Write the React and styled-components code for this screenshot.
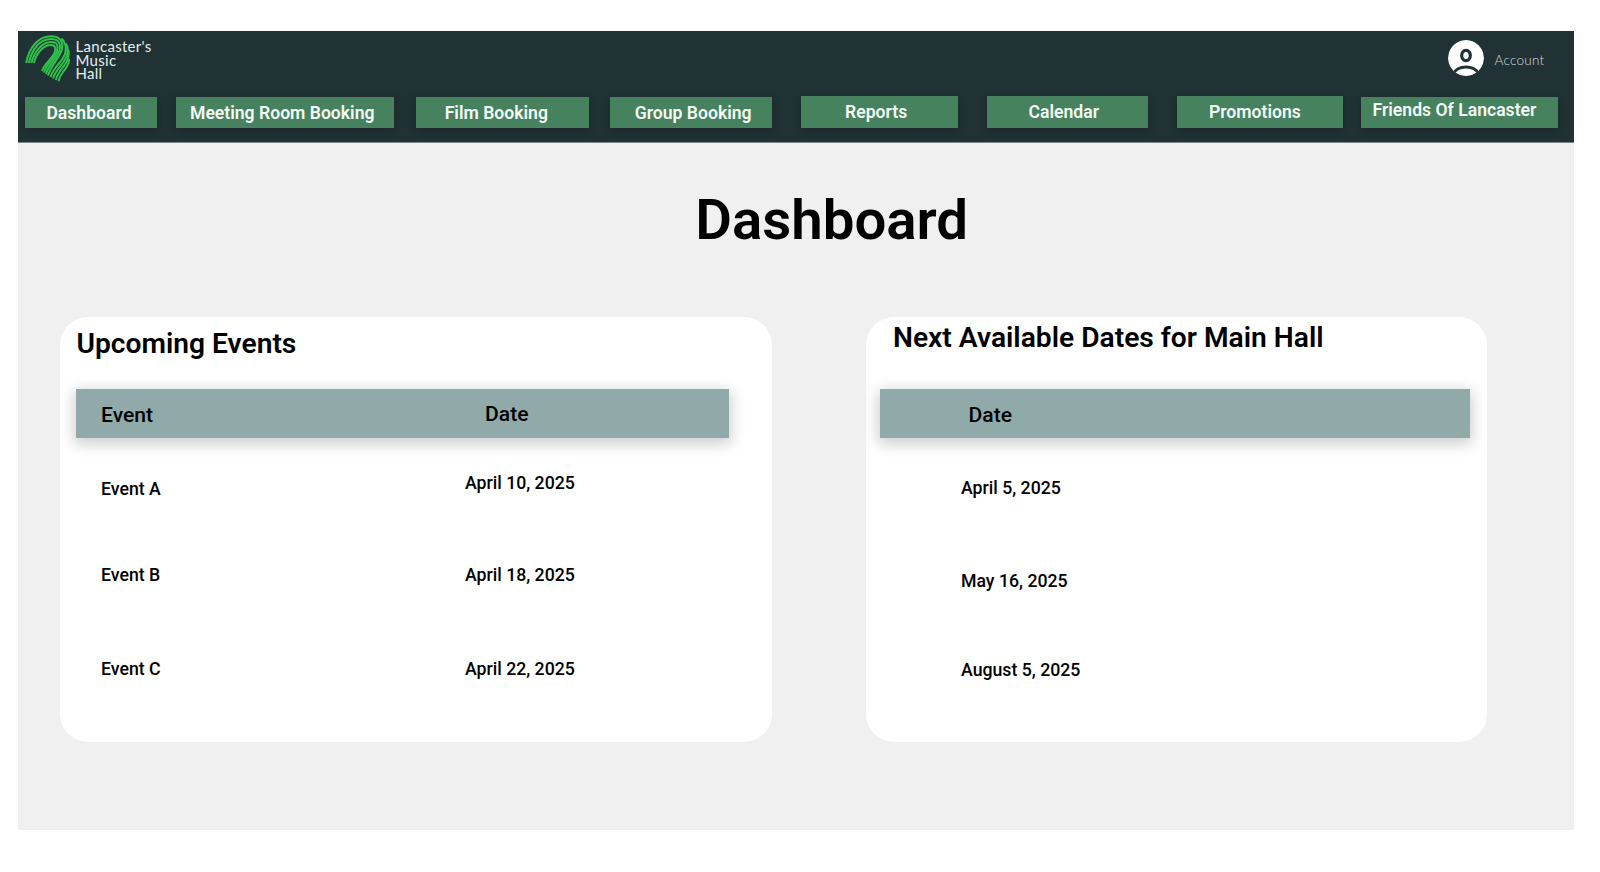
import React from "react";
import styled, { createGlobalStyle } from "styled-components";

const Global = createGlobalStyle`
  * { box-sizing: border-box; }
  body { margin: 0; background: #fff; font-family: Roboto, "Liberation Sans", sans-serif; color: #000; }
  h1, h2, p { margin: 0; }
`;

const Page = styled.div`
  width: 1556px;
  height: 799px;
  margin: 31px 0 0 18px;
  background: #f0f0f0;
`;

const Header = styled.header`
  height: 111.5px;
  background: #213235;
  border-bottom: 1px solid #7d8587;
`;

const TopBar = styled.div`
  display: flex;
  justify-content: space-between;
  height: 65px;
  padding: 4px 29.6px 0 7px;
`;

const Brand = styled.div`
  display: flex;
  gap: 5.5px;
`;

const BrandName = styled.p`
  padding-top: 5px;
  font-family: Lato, sans-serif;
  font-size: 15px;
  line-height: 13.5px;
  letter-spacing: 0.3px;
  color: #e6eeee;
  white-space: pre-line;
`;

const Account = styled.div`
  display: flex;
  gap: 11px;
  padding-top: 5px;
`;

const AccountLabel = styled.span`
  padding-top: 12px;
  font-family: Lato, sans-serif;
  font-weight: 300;
  font-size: 13.6px;
  line-height: 16px;
  color: #d3dada;
  letter-spacing: 0.2px;
`;

const Nav = styled.nav`
  display: flex;
  padding-left: 7.1px;
`;

const NavButton = styled.a`
  width: ${(p) => p.$w}px;
  height: ${(p) => p.$h || 31}px;
  margin-left: ${(p) => p.$gap}px;
  margin-top: ${(p) => p.$top}px;
  padding: ${(p) => p.$textTop}px 0 0 ${(p) => p.$inset}px;
  background: #46825e;
  box-shadow: 0 3px 8px 2px rgba(0, 0, 0, 0.16);
  color: #f4fbf6;
  font-weight: 600;
  font-size: 17.6px;
  line-height: 20px;
  white-space: nowrap;
`;

const Title = styled.h1`
  padding: 44px 0 0 677.2px;
  font-weight: 600;
  font-size: 56.4px;
  line-height: 66px;
`;

const Cards = styled.main`
  display: flex;
  gap: 94px;
  padding: 64.5px 0 0 42px;
`;

const Card = styled.section`
  width: ${(p) => p.$w}px;
  height: 425px;
  padding-left: ${(p) => p.$pad}px;
  border-radius: 28px;
  background: #fff;
`;

const CardTitle = styled.h2`
  height: 72px;
  padding: ${(p) => p.$top}px 0 0 ${(p) => p.$inset}px;
  font-weight: 600;
  font-size: 28.2px;
  line-height: 34px;
`;

const TableHead = styled.div`
  display: flex;
  width: ${(p) => p.$w}px;
  height: 49px;
  background: #8faaa9;
  box-shadow: 0 4px 14px 2px rgba(0, 0, 0, 0.2);
`;

const HeadCell = styled.div`
  width: ${(p) => p.$w}px;
  padding: ${(p) => p.$top}px 0 0 ${(p) => p.$inset}px;
  font-weight: 500;
  font-size: 21.1px;
  line-height: 24px;
`;

const TableBody = styled.div`
  display: flex;
`;

const Column = styled.div`
  width: ${(p) => p.$w}px;
  padding-left: ${(p) => p.$inset}px;
`;

const Cell = styled.div`
  margin-top: ${(p) => p.$gap}px;
  font-weight: 500;
  font-size: 17.7px;
  line-height: 20px;
  white-space: nowrap;
`;

const navItems = [
  { label: "Dashboard", w: 131.5, gap: 0, top: 1, inset: 21.3, textTop: 6 },
  { label: "Meeting Room Booking", w: 218, gap: 19.4, top: 1, inset: 14, textTop: 6 },
  { label: "Film Booking", w: 173, gap: 22, top: 1, inset: 28.7, textTop: 5.5 },
  { label: "Group Booking", w: 162, gap: 21, top: 1, inset: 24.7, textTop: 5.5 },
  { label: "Reports", w: 157, h: 31.5, gap: 29, top: 0, inset: 44, textTop: 6 },
  { label: "Calendar", w: 161, h: 31.5, gap: 29, top: 0, inset: 41.5, textTop: 6 },
  { label: "Promotions", w: 166, h: 31.5, gap: 29, top: 0, inset: 32, textTop: 6 },
  { label: "Friends Of Lancaster", w: 197, gap: 18, top: 1, inset: 11.5, textTop: 3.4 },
];

const eventNames = [["Event A", 41], ["Event B", 66], ["Event C", 73.9]];
const eventDates = [["April 10, 2025", 35], ["April 18, 2025", 72], ["April 22, 2025", 73.9]];
const hallDates = [["April 5, 2025", 40], ["May 16, 2025", 73], ["August 5, 2025", 69]];

const logoStrands = [
  "M1.2 28C4 13 13 1.2 26 1.2C35 1.2 38.5 7 37 14C35 23 26 30 23 40.5",
  "M3.8 28C7 14 15 4 26 4C34 4 36 9 34.5 15C32.5 23 24 29 21 39",
  "M6.4 28C9 17 17 7 26 7C32.5 7 33.5 11 32 16C30 23 22 28 19 37.5",
  "M9 28C11 19 18 10 26 10C31 10 31 14 29.5 18C27 24 20 28 17 36",
  "M36.5 3.5C42 9 42 17 38 23C34 29 28 34 25.5 42",
  "M41 8.5C44.5 15 42 22 38.5 27C34.5 32 30 37 28 43.5",
  "M43.3 15C45 22 42 27 38.5 31.5C35 36 32 40 30.8 45",
  "M44.3 24C44 30 41 33.5 38 37C36 39.5 34.5 42 33.5 46.2",
];

function Logo() {
  return (
    <svg width="45" height="47" viewBox="0 0 45 47" fill="none" stroke="#2fc24a" strokeWidth="2">
      {logoStrands.map((d) => <path key={d} d={d} />)}
    </svg>
  );
}

function Avatar() {
  return (
    <svg width="36" height="36" viewBox="0 0 36 36">
      <defs><clipPath id="disc"><circle cx="18" cy="18" r="18" /></clipPath></defs>
      <g clipPath="url(#disc)">
        <circle cx="18" cy="18" r="18" fill="#fff" />
        <ellipse cx="18" cy="15.5" rx="4.3" ry="5.2" fill="none" stroke="#213235" strokeWidth="3.2" />
        <path d="M5 34.5C9 24.5 27 24.5 31 34.5" fill="none" stroke="#213235" strokeWidth="3.2" />
      </g>
    </svg>
  );
}

function Cells({ items }) {
  return items.map(([text, gap]) => <Cell key={text} $gap={gap}>{text}</Cell>);
}

export default function App() {
  return (
    <>
      <Global />
      <Page>
        <Header>
          <TopBar>
            <Brand>
              <Logo />
              <BrandName>{"Lancaster's\nMusic\nHall"}</BrandName>
            </Brand>
            <Account>
              <Avatar />
              <AccountLabel>Account</AccountLabel>
            </Account>
          </TopBar>
          <Nav>
            {navItems.map((n) => (
              <NavButton key={n.label} $w={n.w} $h={n.h} $gap={n.gap} $top={n.top} $inset={n.inset} $textTop={n.textTop}>
                {n.label}
              </NavButton>
            ))}
          </Nav>
        </Header>
        <Title>Dashboard</Title>
        <Cards>
          <Card $w={712} $pad={16.4}>
            <CardTitle $top={10} $inset={0}>Upcoming Events</CardTitle>
            <TableHead $w={652.4}>
              <HeadCell $w={384} $top={14} $inset={24.6}>Event</HeadCell>
              <HeadCell $w={268} $top={13} $inset={24.6}>Date</HeadCell>
            </TableHead>
            <TableBody>
              <Column $w={364} $inset={24.6}><Cells items={eventNames} /></Column>
              <Column $w={288} $inset={24.6}><Cells items={eventDates} /></Column>
            </TableBody>
          </Card>
          <Card $w={621} $pad={14}>
            <CardTitle $top={4} $inset={13}>Next Available Dates for Main Hall</CardTitle>
            <TableHead $w={590}>
              <HeadCell $w={590} $top={14} $inset={88.5}>Date</HeadCell>
            </TableHead>
            <TableBody>
              <Column $w={590} $inset={81}><Cells items={hallDates} /></Column>
            </TableBody>
          </Card>
        </Cards>
      </Page>
    </>
  );
}
